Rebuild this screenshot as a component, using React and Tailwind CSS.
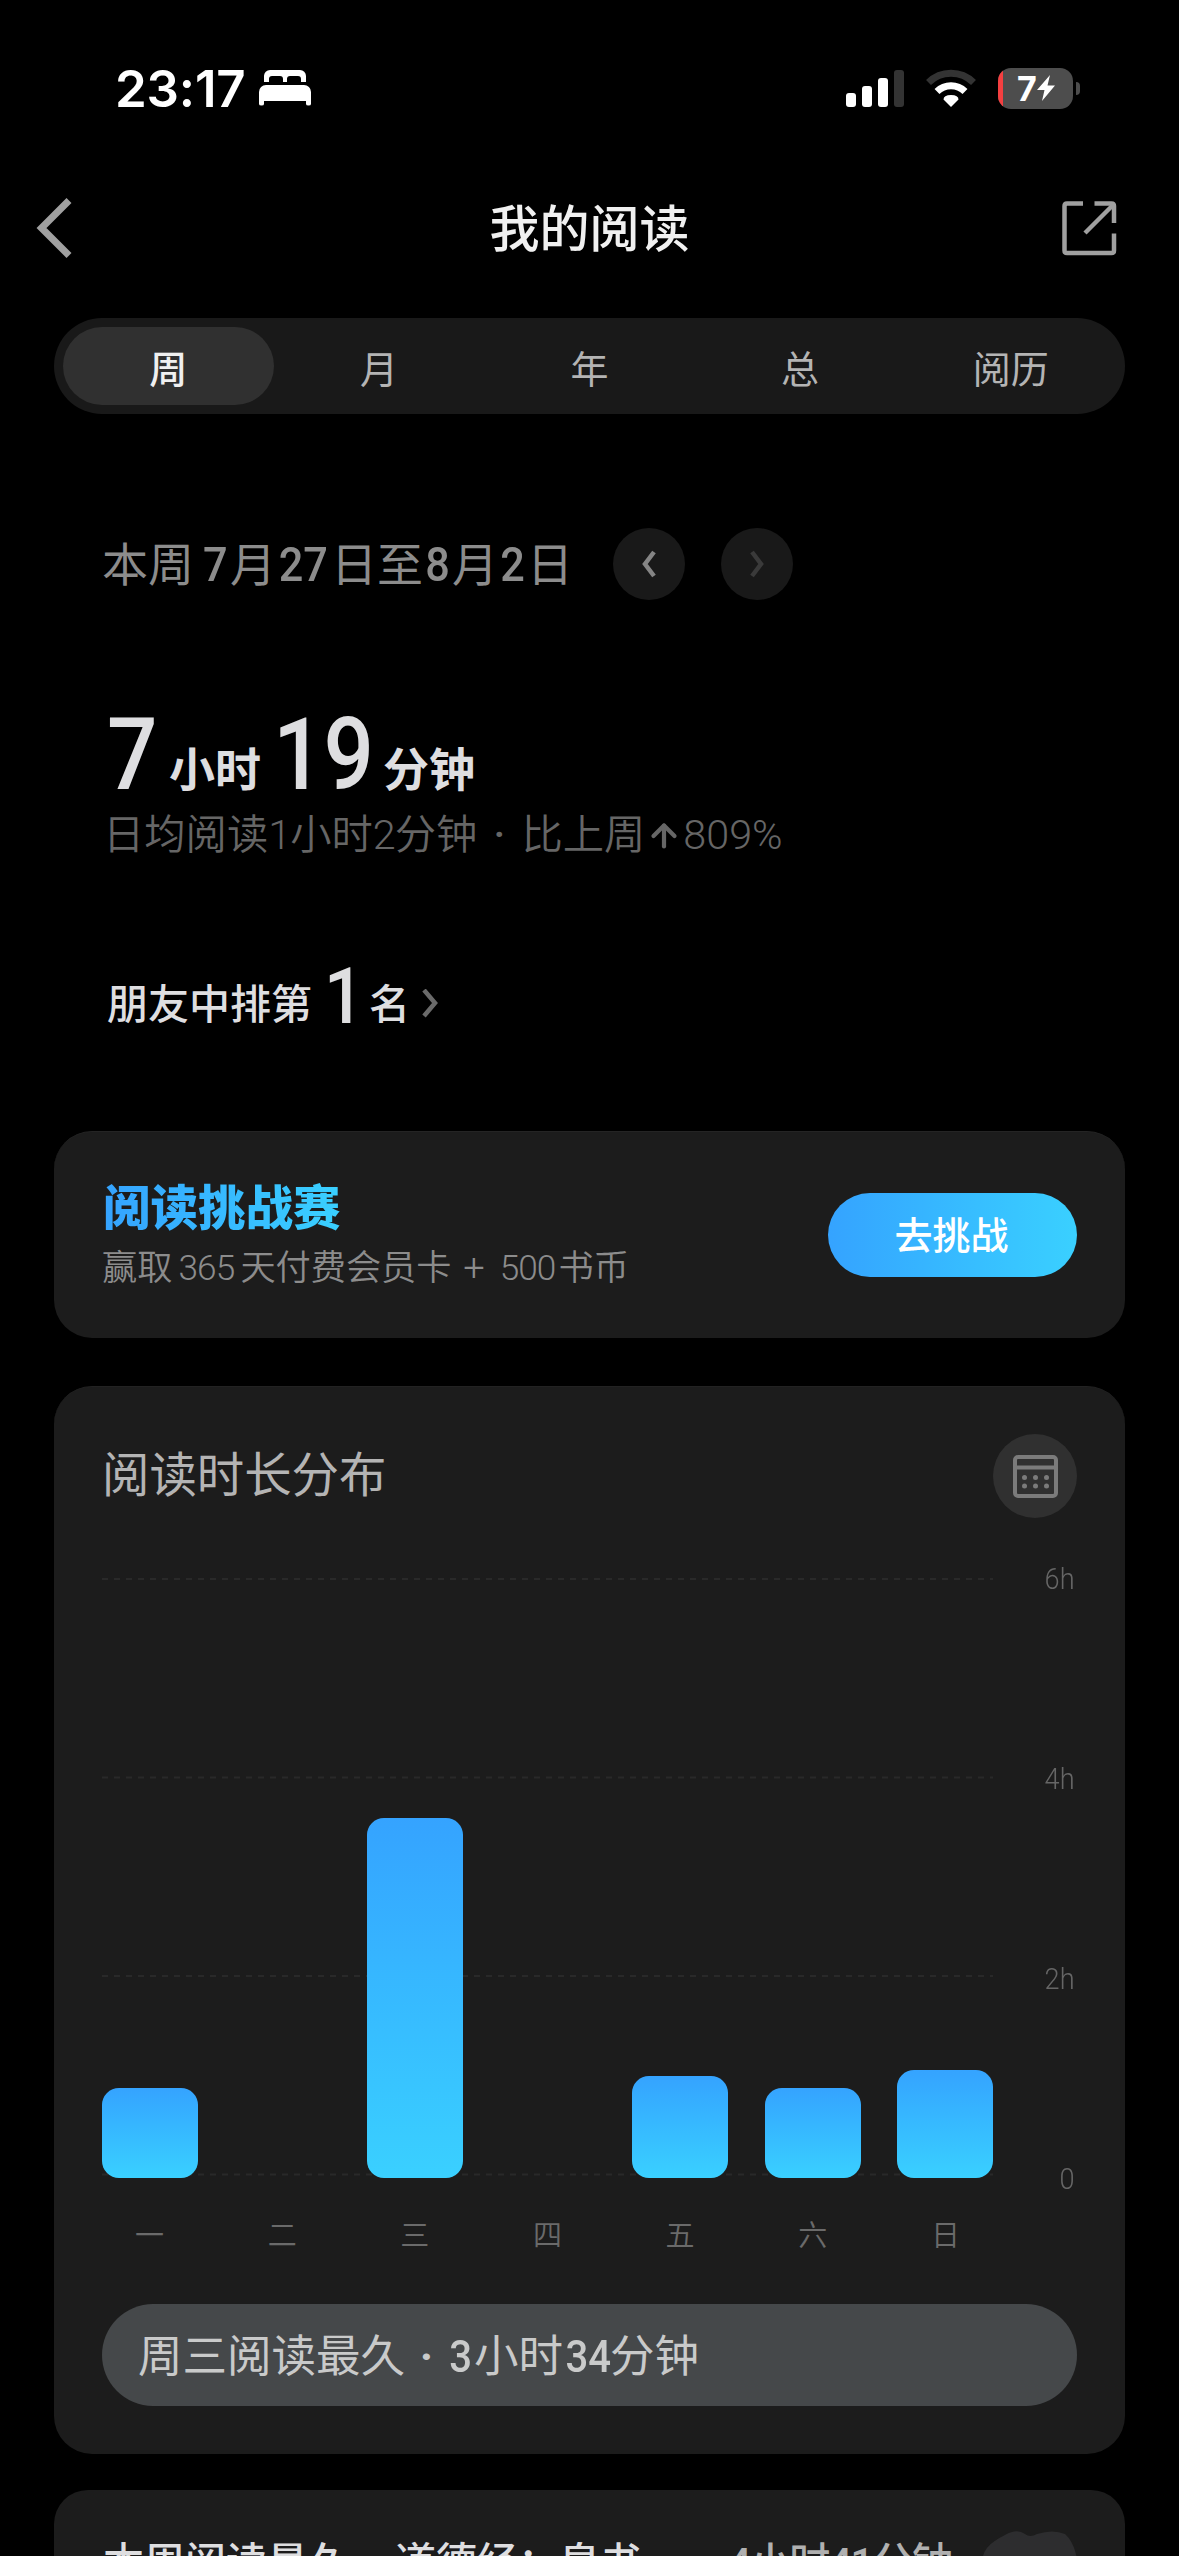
import { ArrowUp } from 'lucide-react';

const tabs = ['周', '月', '年', '总', '阅历'];

const days = [
  { label: '一', height: 90 },
  { label: '二', height: 0 },
  { label: '三', height: 360 },
  { label: '四', height: 0 },
  { label: '五', height: 102 },
  { label: '六', height: 90 },
  { label: '日', height: 108 }
];

const hours = ['6h', '4h', '2h', '0'];

function BedIcon() {
  return (
    <svg className="w-[52px] h-[36px]" viewBox="0 0 52 36" fill="white">
      <path d="M5 12V6a6 6 0 0 1 6-6h30a6 6 0 0 1 6 6v6h-5V9q0-3-3-3h-8q-3 0-3 3v3h-4V9q0-3-3-3h-8q-3 0-3 3v3z" />
      <path d="M0 34V22a7 7 0 0 1 7-7h38a7 7 0 0 1 7 7v12q0 1.500-2.500 1.500T47 34v-3H5v3q0 1.500-2.500 1.500T0 34z" />
    </svg>
  );
}

function SignalIcon() {
  return (
    <svg className="w-[58px] h-[37px]" viewBox="0 0 58 37" fill="white">
      <rect x="0" y="23" width="10" height="14" rx="3" />
      <rect x="16" y="16" width="10" height="21" rx="3" />
      <rect x="32" y="8" width="10" height="29" rx="3" />
      <rect x="48" y="0" width="10" height="37" rx="3" fill="#333333" />
    </svg>
  );
}

function WifiIcon() {
  return (
    <svg className="w-[50px] h-[38px]" viewBox="0 0 50 38" fill="none" strokeWidth="7">
      <path d="M2.500 13.500a32 32 0 0 1 45 0" stroke="#333333" />
      <path d="M11 22.500a20 20 0 0 1 28 0" stroke="white" />
      <path d="M25 38l-7.500-7.500q0-4.500 7.500-4.500t7.500 4.500z" fill="white" />
    </svg>
  );
}

function Battery() {
  return (
    <div className="flex items-center gap-[3px]">
      <div className="flex w-[75px] h-[41px] rounded-[13px] bg-[#4d4d4d] overflow-hidden">
        <div className="w-[5px] bg-[#f43f40]" />
        <div className="flex-1 flex items-center justify-center pr-[4px]">
          <span className="font-['Inter'] text-[34px] leading-[41px] font-bold text-white">7</span>
          <svg className="w-[18px] h-[26px]" viewBox="0 0 18 26" fill="white">
            <path d="M13 0L0 15h7.500L5 26 18 10.500h-7.500z" />
          </svg>
        </div>
      </div>
      <div className="w-[4px] h-[13px] rounded-r-full bg-[#4d4d4d]" />
    </div>
  );
}

function StatusBar() {
  return (
    <div className="flex h-[176px] shrink-0 items-center justify-between pl-[115px] pr-[99px]">
      <div className="flex items-center gap-[14px]">
        <span className="w-[130px] font-['Inter'] text-[51px] leading-none font-semibold tracking-[-0.2px] text-white">23:17</span>
        <BedIcon />
      </div>
      <div className="flex items-center gap-[22px]">
        <SignalIcon />
        <WifiIcon />
        <Battery />
      </div>
    </div>
  );
}

function Header() {
  return (
    <div className="flex h-[104px] shrink-0 items-center justify-between pl-[36px] pr-[62px]">
      <svg className="w-[55px] h-[60px]" viewBox="0 0 55 60" fill="none" stroke="#a0a0a0" strokeWidth="7">
        <path d="M33 2.500L5.500 30 33 57.500" />
      </svg>
      <h1 className="pt-[4px] pl-[26px] text-[50px] leading-[60px] font-medium text-[#f0f0f0]">我的阅读</h1>
      <svg className="w-[55px] h-[55px]" viewBox="0 0 55 55" fill="none" stroke="#a0a0a0" strokeWidth="4.500">
        <path d="M21 2.500H5Q2.500 2.500 2.500 5v44.500q0 2.500 2.500 2.500h44.500q2.500 0 2.500-2.500V32.500" />
        <path d="M32.500 2.500H49.500Q52 2.500 52 5v17" />
        <path d="M51 4L23 32" />
      </svg>
    </div>
  );
}

function RoundArrow({ d, color }) {
  return (
    <div className="flex w-[72px] h-[72px] items-center justify-center rounded-full bg-[#191919]">
      <svg className="w-[16px] h-[28px]" viewBox="0 0 16 28" fill="none" stroke={color} strokeWidth="4.500">
        <path d={d} />
      </svg>
    </div>
  );
}

function Summary() {
  return (
    <div className="flex flex-col px-[103px]">
      <div className="mt-[114px] flex h-[72px] items-center">
        <div className="-ml-[1px] flex w-[511px] pt-[2px] text-[46px] leading-[72px] text-[#8c8c8c]">
          <span>本周</span>
          <span className="w-[36px] pl-[9px] text-[48px] font-medium"><span className="inline-block origin-left scale-x-90">7</span></span>
          <span>月</span>
          <span className="w-[55px] text-center text-[48px] font-medium"><span className="inline-block scale-x-90">27</span></span>
          <span>日至</span>
          <span className="w-[29px] text-center text-[48px] font-medium"><span className="inline-block scale-x-90">8</span></span>
          <span>月</span>
          <span className="w-[29px] text-center text-[48px] font-medium"><span className="inline-block scale-x-90">2</span></span>
          <span>日</span>
        </div>
        <div className="flex gap-[36px]">
          <RoundArrow d="M13 2L4 14l9 12" color="#858585" />
          <RoundArrow d="M3 2l9 12-9 12" color="#3a3a3a" />
        </div>
      </div>

      <div className="mt-[119px] flex h-[72px] items-baseline text-[46px] leading-[72px] font-bold text-[#dedee0]">
        <span className="w-[66px] pl-[4px] text-[101px] font-medium">
          <span className="inline-block origin-left scale-x-88">7</span>
        </span>
        <span className="relative -top-[3px]">小时</span>
        <span className="w-[122px] pl-[12px] text-[101px] font-medium">
          <span className="inline-block origin-left scale-x-88">19</span>
        </span>
        <span className="relative -top-[3px]">分钟</span>
      </div>

      <div className="mt-[24px] flex h-[41px] items-center text-[41.300px] leading-[41px] font-[350] text-[#666666]">
        <span>日均阅读</span>
        <span className="w-[22px] text-center">1</span>
        <span>小时</span>
        <span className="w-[22px] text-center">2</span>
        <span>分钟</span>
        <span className="w-[44px] text-center font-medium">·</span>
        <span>比上周</span>
        <ArrowUp className="mx-[1px] w-[36px] h-[36px]" strokeWidth={2.8} />
        <span>809%</span>
      </div>

      <div className="mt-[109px] flex h-[56px] items-baseline text-[41px] leading-[56px] font-medium text-[#dedee0]">
        <span className="pl-[4px]">朋友中排第</span>
        <span className="relative top-[4px] w-[57px] pl-[12px] text-[78px]">
          <span className="inline-block origin-left scale-x-90">1</span>
        </span>
        <span>名</span>
        <svg className="ml-[12px] w-[17px] h-[30px]" viewBox="0 0 17 30" fill="none" stroke="#6a6a6a" strokeWidth="4.500">
          <path d="M2 1l11 13L2 27" />
        </svg>
      </div>
    </div>
  );
}

function Challenge() {
  return (
    <div className="mx-[54px] mt-[110px] flex h-[207px] shrink-0 items-center justify-between rounded-[38px] border-t border-[#242424] bg-[#1c1c1c] pl-[49px] pr-[48px]">
      <div className="flex flex-col items-start pt-[5px]">
        <h2 className="bg-linear-to-r from-[#35a3ff] to-[#3ad0ff] bg-clip-text text-[47.500px] leading-[60px] font-black text-transparent">
          阅读挑战赛
        </h2>
        <p className="-ml-[1px] flex text-[35.200px] leading-[58px] font-[350] text-[#8c8c8c]">
          <span>赢取</span>
          <span className="w-[68px] text-center tracking-[-1px]">365</span>
          <span>天付费会员卡</span>
          <span className="w-[45px] text-center text-[38px]">+</span>
          <span className="w-[62px] text-center tracking-[-1px]">500</span>
          <span>书币</span>
        </p>
      </div>
      <button className="h-[84px] w-[249px] rounded-full bg-linear-to-r from-[#35a3ff] to-[#3ad0ff] pt-[3px] pr-[2px] text-[38px] leading-[81px] font-medium text-white">
        去挑战
      </button>
    </div>
  );
}

function Chart() {
  return (
    <div className="mt-[48px] flex h-[696px] justify-between">
      <div className="flex w-[891px] flex-col">
        <div className="relative mt-[12px] h-[600px]">
          <svg className="absolute inset-0 w-full h-full" fill="none" stroke="#292929" strokeWidth="2" strokeDasharray="6 6">
            <path d="M0 1h891M0 199.500h891M0 398h891M0 596.500h891" />
          </svg>
          <div className="relative flex h-full items-end justify-between">
            {days.map(day => (
              <div
                key={day.label}
                className="w-[96px] rounded-[17px] bg-linear-to-b from-[#35a3ff] to-[#3ad0ff]"
                style={{ height: day.height }}
              />
            ))}
          </div>
        </div>
        <div className="mt-[37px] flex justify-between text-[29px] leading-[42px] font-[350] text-[#6a6a6a]">
          {days.map(day => (
            <span key={day.label} className="w-[95px] text-center">{day.label}</span>
          ))}
        </div>
      </div>
      <div className="flex h-[627px] flex-col justify-between pr-[2px] text-right text-[29.500px] leading-[27px] font-[350] text-[#666666]">
        {hours.map(hour => (
          <span key={hour} className="origin-right scale-x-92">{hour}</span>
        ))}
      </div>
    </div>
  );
}

function Distribution() {
  return (
    <div className="mx-[54px] mt-[48px] flex h-[1068px] shrink-0 flex-col rounded-[38px] border-t border-[#222222] bg-[#1c1c1c] px-[48px] pt-[47px]">
      <div className="flex h-[84px] items-center justify-between">
        <h2 className="text-[47.400px] leading-[84px] text-[#b4b4b4]">阅读时长分布</h2>
        <div className="flex w-[84px] h-[84px] items-center justify-center rounded-full bg-[#303030]">
          <svg className="w-[45px] h-[43px]" viewBox="0 0 45 43" fill="none" stroke="#7b7b7b" strokeWidth="4">
            <rect x="2" y="2" width="41" height="39" rx="3" />
            <path d="M2 12.500h41" />
            <g fill="#7b7b7b" stroke="none">
              <circle cx="11.500" cy="22.500" r="2.500" />
              <circle cx="22.500" cy="22.500" r="2.500" />
              <circle cx="33.500" cy="22.500" r="2.500" />
              <circle cx="11.500" cy="31" r="2.500" />
              <circle cx="22.500" cy="31" r="2.500" />
              <circle cx="33.500" cy="31" r="2.500" />
            </g>
          </svg>
        </div>
      </div>

      <Chart />

      <div className="mt-[42px] flex h-[102px] shrink-0 items-center rounded-full bg-[#45484a] pt-[5px] pl-[36px] text-[44.500px] leading-[97px] text-[#c9caca]">
        <span>周三阅读最久</span>
        <span className="w-[43px] text-center font-bold">·</span>
        <span className="w-[26px] text-center font-medium"><span className="inline-block scale-x-90">3</span></span>
        <span>小时</span>
        <span className="w-[47px] text-center font-medium"><span className="inline-block scale-x-90">34</span></span>
        <span>分钟</span>
      </div>
    </div>
  );
}

function TopBook() {
  return (
    <div className="relative mx-[54px] mt-[36px] flex h-[200px] shrink-0 rounded-t-[34px] bg-[#1c1c1c] pl-[49px] pt-[43px] text-[41px] leading-[60px]">
      <span className="w-[292px] font-medium text-[#dedee0]">本周阅读最久</span>
      <span className="w-[333px] font-medium text-[#dedee0]">道德经：帛书</span>
      <span className="tracking-[-1.500px] font-medium text-[#b0b0b0]">4小时41分钟</span>
      <svg className="absolute left-[929px] top-[40px] w-[94px] h-[40px]" viewBox="0 0 94 40" fill="#2d2d2f">
        <path d="M0 26Q3 14 22 5q12-7 20-1 5 4 12 0 16-5 28 0 9 8 12 25v11H0z" />
      </svg>
    </div>
  );
}

export default function App() {
  return (
    <div className="flex h-[2556px] w-[1179px] flex-col overflow-hidden bg-black font-[Roboto,'Noto_Sans_CJK_SC',sans-serif]">
      <StatusBar />
      <Header />

      <div className="mx-[54px] mt-[38px] flex h-[96px] shrink-0 rounded-full bg-[#191919] p-[9px]">
        {tabs.map((tab, i) => (
          <div
            key={tab}
            className={`flex-1 rounded-full pt-[3px] text-center text-[38px] leading-[80px] ${i === 0 ? 'bg-[#303030] font-medium text-[#f0f0f0]' : 'text-[#b4b4b4]'}`}
          >
            {tab}
          </div>
        ))}
      </div>

      <Summary />
      <Challenge />
      <Distribution />
      <TopBook />
    </div>
  );
}
